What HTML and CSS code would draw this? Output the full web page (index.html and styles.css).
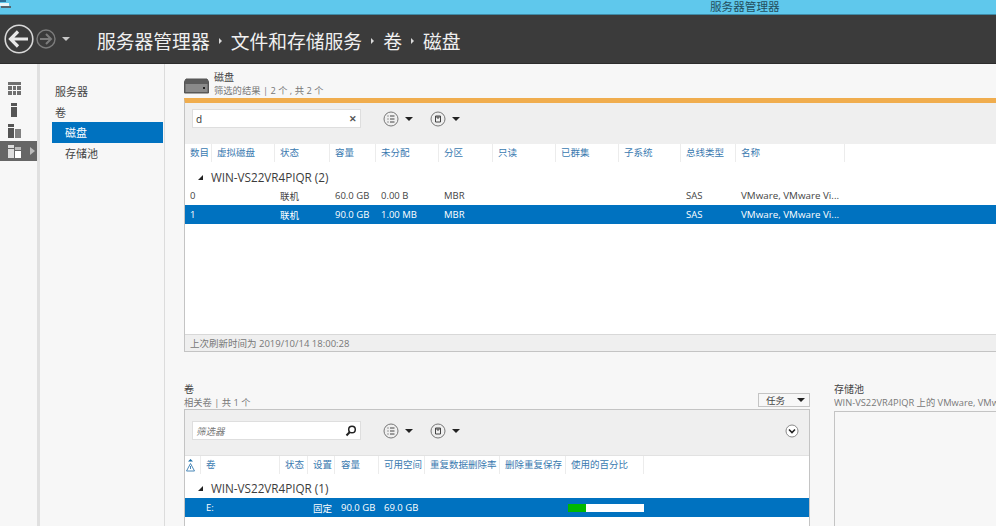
FILE: index.html
```html
<!DOCTYPE html>
<html lang="zh-CN">
<head>
  <meta charset="UTF-8" />
  <meta name="viewport" content="width=device-width, initial-scale=1.0"/>
  <title>服务器管理器</title>
  <link rel="stylesheet" href="styles.css">
</head>
<body>

  <div class="titlebar">
    <svg class="appIcon" width="11" height="12" viewBox="0 0 11 12">
      <rect x="0" y="1" width="6" height="4" fill="#2d6f96"/>
      <rect x="0" y="6" width="9" height="3" fill="#e8f4f8"/>
      <rect x="1" y="9" width="10" height="2" fill="#55646e"/>
    </svg>
    <span class="titleText">服务器管理器</span>
  </div>

  <div class="topbar">
    <svg class="navBack" width="30" height="30" viewBox="0 0 30 30">
      <circle cx="15" cy="15" r="13.8" fill="none" stroke="#d8d8d8" stroke-width="1.6"/>
      <path d="M6 15H24M14 7.5L6.5 15L14 22.5" fill="none" stroke="#e8e8e8" stroke-width="3.2"/>
    </svg>
    <svg class="navForward" width="20" height="20" viewBox="0 0 20 20">
      <circle cx="10" cy="10" r="9" fill="none" stroke="#7c7c7c" stroke-width="1.4"/>
      <path d="M4 10H15M10 5L15 10L10 15" fill="none" stroke="#7c7c7c" stroke-width="2"/>
    </svg>
    <span class="navMenu"></span>
    <h1 class="crumbs">
      <span>服务器管理器</span><i></i><span>文件和存储服务</span><i></i><span>卷</span><i></i><span>磁盘</span>
    </h1>
  </div>

  <div class="main">
    <div class="rail">
      <div class="railItem">
        <svg width="13" height="13" viewBox="0 0 13 13"><path d="M0 0H13V3H0ZM0 4H4V8H0ZM5 4H8V8H5ZM9 4H13V8H9ZM0 9H4V13H0ZM5 9H8V13H5ZM9 9H13V13H9Z" fill="#707070"/></svg>
      </div>
      <div class="railItem">
        <svg class="railServer" width="6" height="14" viewBox="0 0 6 14"><rect width="6" height="3" fill="#555"/><rect y="4" width="6" height="10" fill="#555"/></svg>
      </div>
      <div class="railItem">
        <svg width="13" height="14" viewBox="0 0 13 14"><rect width="6" height="3" fill="#555"/><rect y="4" width="6" height="10" fill="#555"/><rect x="7" y="5" width="6" height="9" fill="#808080"/></svg>
      </div>
      <div class="railItem active">
        <svg width="13" height="13" viewBox="0 0 13 13"><rect width="6" height="3" fill="#ddd"/><rect y="4" width="6" height="9" fill="#ddd"/><rect x="7" y="2" width="6" height="3" fill="#bbb"/><rect x="7" y="6" width="6" height="7" fill="#fff"/></svg>
        <span class="railArrow"></span>
      </div>
    </div>

    <div class="nav">
      <div class="navItem">服务器</div>
      <div class="navItem">卷</div>
      <div class="navItem sub selected">磁盘</div>
      <div class="navItem sub">存储池</div>
    </div>

    <div class="content">
      <div class="sectionHead">
        <svg class="diskIcon" width="25" height="16" viewBox="0 0 25 16">
          <path d="M2 1H23L24.500 3.500V15H0.500V3.500Z" fill="#5c5c5c" stroke="#555"/>
          <rect x="1.500" y="6" width="22" height="8" fill="#8a8a8a"/>
          <rect x="19" y="9" width="2" height="2" fill="#222"/>
        </svg>
        <div>
          <div class="sectionTitle">磁盘</div>
          <div class="sectionSub">筛选的结果 | 2 个 , 共 2 个</div>
        </div>
      </div>

      <div class="panel diskPanel">
        <div class="toolbar">
          <div class="filter">
            <span class="filterText">d</span>
            <span class="clear">✕</span>
          </div>
          <div class="toolBtn">
            <svg width="16" height="16" viewBox="0 0 16 16"><circle cx="8" cy="8" r="7" fill="none" stroke="#777"/><path d="M4.500 5H5.500M7 5H11.500M4.500 8H5.500M7 8H11.500M4.500 11H5.500M7 11H11.500" stroke="#444"/></svg>
            <span class="caret"></span>
          </div>
          <div class="toolBtn">
            <svg width="16" height="16" viewBox="0 0 16 16"><circle cx="8" cy="8" r="7" fill="none" stroke="#777"/><path d="M5.500 5H10.500V11H5.500ZM7 5V7H9V5" fill="none" stroke="#444"/></svg>
            <span class="caret"></span>
          </div>
        </div>

        <div class="row diskCols head">
          <span>数目</span><span>虚拟磁盘</span><span>状态</span><span>容量</span><span>未分配</span><span>分区</span><span>只读</span><span>已群集</span><span>子系统</span><span>总线类型</span><span>名称</span>
        </div>
        <div class="group"><span class="groupArrow"></span>WIN-VS22VR4PIQR (2)</div>
        <div class="row diskCols data">
          <span>0</span><span></span><span>联机</span><span>60.0 GB</span><span>0.00 B</span><span>MBR</span><span></span><span></span><span></span><span>SAS</span><span class="nameCell">VMware, VMware Vi...</span>
        </div>
        <div class="row diskCols data picked">
          <span>1</span><span></span><span>联机</span><span>90.0 GB</span><span>1.00 MB</span><span>MBR</span><span></span><span></span><span></span><span>SAS</span><span class="nameCell">VMware, VMware Vi...</span>
        </div>
        <div class="spacer"></div>
        <div class="statusLine">上次刷新时间为 2019/10/14 18:00:28</div>
      </div>

      <div class="lower">
        <div class="volumes">
          <div class="lowerHead">
            <div>
              <div class="sectionTitle">卷</div>
              <div class="sectionSub">相关卷 | 共 1 个</div>
            </div>
            <div class="tasks">任务<span class="caret"></span></div>
          </div>
          <div class="panel volPanel">
            <div class="toolbar">
              <div class="filter">
                <span class="filterHint">筛选器</span>
                <svg class="search" width="12" height="12" viewBox="0 0 12 12"><circle cx="7" cy="4.500" r="3.300" fill="none" stroke="#222" stroke-width="1.500"/><path d="M4.800 7L1.500 10.500" stroke="#222" stroke-width="2"/></svg>
              </div>
              <div class="toolBtn">
                <svg width="16" height="16" viewBox="0 0 16 16"><circle cx="8" cy="8" r="7" fill="none" stroke="#777"/><path d="M4.500 5H5.500M7 5H11.500M4.500 8H5.500M7 8H11.500M4.500 11H5.500M7 11H11.500" stroke="#444"/></svg>
                <span class="caret"></span>
              </div>
              <div class="toolBtn">
                <svg width="16" height="16" viewBox="0 0 16 16"><circle cx="8" cy="8" r="7" fill="none" stroke="#777"/><path d="M5.500 5H10.500V11H5.500ZM7 5V7H9V5" fill="none" stroke="#444"/></svg>
                <span class="caret"></span>
              </div>
              <svg class="expand" width="14" height="14" viewBox="0 0 14 14"><circle cx="7" cy="7" r="6" fill="#fff" stroke="#888"/><path d="M4 5.500L7 8.500L10 5.500" fill="none" stroke="#222" stroke-width="1.600"/></svg>
            </div>

            <div class="row volCols head">
              <span class="warnHead">
                <svg width="9" height="13" viewBox="0 0 9 13"><path d="M4.500 0L7 2.500H2Z" fill="#1c6fa8"/><path d="M4.500 4.500L8.500 12H0.500Z" fill="none" stroke="#4a88b8"/><path d="M4.500 7V10" stroke="#4a88b8"/></svg>
              </span>
              <span>卷</span><span>状态</span><span>设置</span><span class="capHead">容量</span><span>可用空间</span><span>重复数据删除率</span><span>删除重复保存</span><span>使用的百分比</span>
            </div>
            <div class="group"><span class="groupArrow"></span>WIN-VS22VR4PIQR (1)</div>
            <div class="row volCols data picked">
              <span></span><span>E:</span><span></span><span>固定</span><span class="capCell">90.0 GB</span><span>69.0 GB</span><span></span><span></span>
              <span class="usage"><span class="usageFill" style="width: 24%"></span></span>
            </div>
          </div>
        </div>

        <div class="pools">
          <div class="sectionTitle poolTitle">存储池</div>
          <div class="sectionSub">WIN-VS22VR4PIQR 上的 VMware, VMware Vi...</div>
          <div class="poolBox"></div>
        </div>
      </div>
    </div>
  </div>

</body>
</html>
```

FILE: styles.css
```css
* {
  margin: 0;
  padding: 0;
  box-sizing: border-box;
}

html,
body {
  height: 100vh;
  overflow: hidden;
}

body {
  display: flex;
  flex-direction: column;
  background: #f7f7f7;
  color: #444;
  font-family: "Open Sans", "Noto Sans CJK SC", sans-serif;
  font-size: 9.5px;
}

.titlebar {
  flex: none;
  height: 15px;
  display: flex;
  background: #5fc8ec;
  border-bottom: 1px solid #3f8aa5;
}

.appIcon {
  flex: none;
  margin-top: -3px;
}

.titleText {
  margin-left: 699px;
  font-size: 11.6px;
  line-height: 13px;
  color: #24505f;
}

.topbar {
  flex: none;
  height: 49px;
  display: flex;
  align-items: center;
  padding-left: 4px;
  background: #3b3b3b;
  border-bottom: 1px solid #2c2c2c;
}

.navForward {
  margin-left: 2px;
}

.navMenu {
  width: 0;
  height: 0;
  margin-left: 6px;
  border-left: 4px solid transparent;
  border-right: 4px solid transparent;
  border-top: 4px solid #c8c8c8;
}

.crumbs {
  display: flex;
  align-items: center;
  margin: 3px 0 0 27px;
  font-size: 18.8px;
  font-weight: 400;
  color: #f0f0f0;
}

.crumbs i {
  width: 0;
  height: 0;
  margin: 0 9px;
  border-top: 3px solid transparent;
  border-bottom: 3px solid transparent;
  border-left: 3px solid #d8d8d8;
}

.main {
  flex: 1;
  display: flex;
  min-height: 0;
}

.rail {
  flex: none;
  width: 40px;
  padding-top: 14px;
  border-right: 3px solid #e0e0e0;
}

.railItem {
  height: 21px;
  display: flex;
  align-items: center;
  padding-left: 8px;
}

.railItem.active {
  height: 20px;
  background: #666;
}

.railServer {
  margin-left: 3px;
}

.railArrow {
  width: 0;
  height: 0;
  margin-left: 9px;
  border-top: 4px solid transparent;
  border-bottom: 4px solid transparent;
  border-left: 5px solid #bbb;
}

.nav {
  flex: none;
  width: 125px;
  padding: 17px 0 0 12px;
  border-right: 1px solid #dcdcdc;
}

.navItem {
  width: 111px;
  height: 20.500px;
  padding-left: 3px;
  font-size: 11px;
  line-height: 21.500px;
  color: #444;
}

.navItem.sub {
  padding-left: 13px;
}

.navItem.selected {
  background: #0072c0;
  color: #fff;
}

.content {
  flex: 1;
  min-width: 0;
  padding: 7px 0 0 19px;
}

.sectionHead {
  display: flex;
  gap: 5px;
  height: 27px;
}

.diskIcon {
  margin-top: 7px;
}

.sectionTitle {
  font-size: 10px;
  line-height: 13px;
  color: #444;
}

.sectionSub {
  font-size: 9.300px;
  line-height: 13px;
  color: #777;
  white-space: nowrap;
}

.panel {
  display: flex;
  flex-direction: column;
  background: #fff;
  border-left: 1px solid #c4c4c4;
}

.diskPanel {
  height: 254px;
  border-top: 5px solid #f0ad4e;
  border-bottom: 1px solid #c4c4c4;
}

.toolbar {
  flex: none;
  height: 41px;
  display: flex;
  align-items: flex-start;
  padding: 6px 0 0 7px;
  background: #efefef;
}

.filter {
  width: 169px;
  height: 19px;
  display: flex;
  align-items: center;
  justify-content: space-between;
  padding: 0 3px;
  margin-right: 22px;
  background: #fff;
  border: 1px solid #dedede;
  font-size: 10px;
  color: #333;
}

.clear {
  font-size: 9px;
  font-weight: 700;
  color: #555;
}

.filterHint {
  font-style: italic;
  color: #777;
  font-size: 9.500px;
}

.toolBtn {
  display: flex;
  align-items: center;
  gap: 6px;
  width: 47px;
  height: 19px;
}

.caret {
  width: 0;
  height: 0;
  border-left: 4px solid transparent;
  border-right: 4px solid transparent;
  border-top: 4px solid #222;
}

.row {
  display: grid;
  align-items: center;
}

.row > span {
  padding-left: 5px;
  white-space: nowrap;
}

.diskCols {
  grid-template-columns: 27px 63px 55px 46px 63px 54px 63px 63px 62px 55px 109px;
}

.volCols {
  grid-template-columns: 16px 79px 28px 27px 44px 46px 75px 66px 78px;
}

.head {
  height: 18px;
  color: #3a7ab0;
}

.head > span {
  height: 18px;
  line-height: 18px;
  border-right: 1px solid #ececec;
}

.row > .capHead,
.row > .capCell {
  padding-left: 6px;
}

.row > .warnHead {
  display: flex;
  align-items: center;
  padding-left: 1px;
}

.group {
  height: 24px;
  padding: 6px 0 0 13px;
  font-size: 11.700px;
  line-height: 16px;
  color: #3c3c3c;
  display: flex;
  align-items: center;
}

.groupArrow {
  width: 0;
  height: 0;
  margin-right: 8px;
  border-left: 5px solid transparent;
  border-bottom: 5px solid #222;
}

.data {
  height: 19px;
  color: #444;
}

.nameCell {
  font-size: 9.800px;
}

.picked {
  background: #0072c0;
  color: #fff;
}

.spacer {
  flex: 1;
}

.statusLine {
  height: 17px;
  padding-left: 5px;
  line-height: 17px;
  background: #efefef;
  border-top: 1px solid #d8d8d8;
  color: #777;
}

.lower {
  display: flex;
  gap: 24px;
  margin-top: 30px;
}

.volumes {
  flex: none;
  width: 626px;
}

.lowerHead {
  display: flex;
  align-items: flex-end;
  justify-content: space-between;
  height: 27px;
}

.tasks {
  width: 52px;
  height: 14px;
  display: flex;
  align-items: center;
  justify-content: space-between;
  padding: 0 4px 0 7px;
  margin-bottom: 2px;
  background: #f7f7f7;
  border: 1px solid #c4c4c4;
  color: #444;
}

.volPanel {
  height: 140px;
  border-top: 1px solid #c4c4c4;
  border-right: 1px solid #c4c4c4;
}

.volPanel .toolbar {
  height: 46px;
  padding-top: 11px;
  border-bottom: 1px solid #e2e2e2;
}

.volPanel .group {
  padding-top: 4px;
}

.search {
  flex: none;
}

.expand {
  margin: 3px 10px 0 auto;
}

.usage {
  grid-column: 9;
  width: 76px;
  height: 8px;
  margin-left: 2px;
  background: #fff;
}

.row > .usage {
  padding: 0;
}

.usageFill {
  display: block;
  height: 100%;
  background: #00b800;
}

.pools {
  flex: 1;
  min-width: 0;
  overflow: hidden;
}

.poolTitle {
  margin-top: 1px;
}

.poolBox {
  height: 140px;
  width: 300px;
  margin-top: 2px;
  border: 1px solid #c4c4c4;
  background: #f7f7f7;
}
```
